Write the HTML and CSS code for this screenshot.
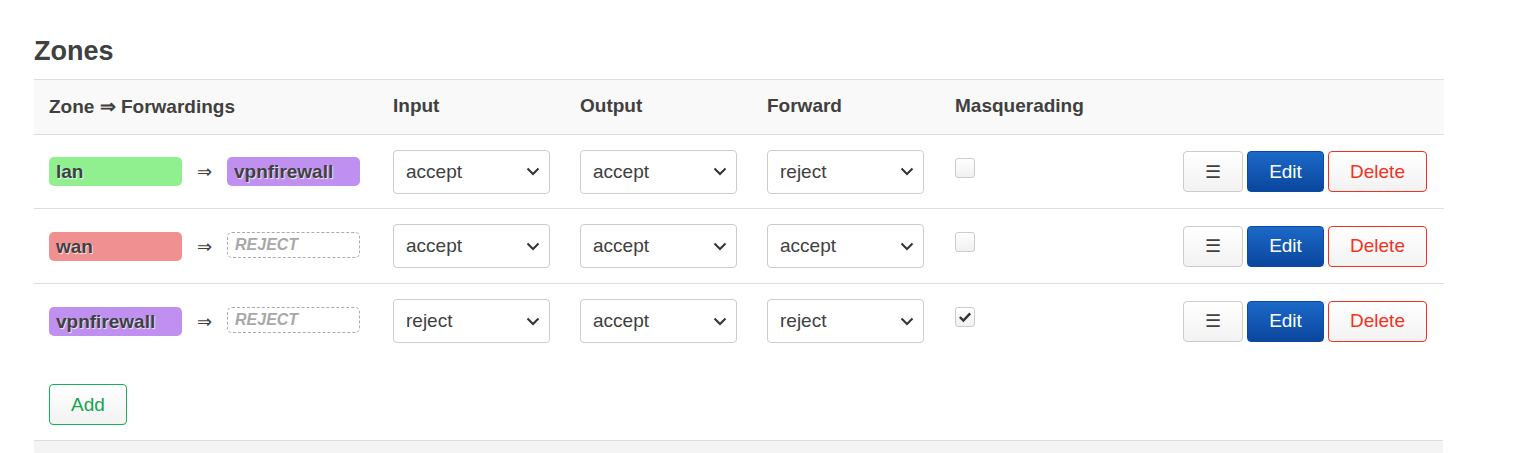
FILE: index.html
```html
<!DOCTYPE html>
<html lang="en">

<head>
  <meta charset="UTF-8">
  <title>Firewall - Zone Settings</title>
  <link rel="stylesheet" href="styles.css">
</head>

<body>
  <div class="section">
    <h3 class="section-title">Zones</h3>

    <div class="zone-table">
      <div class="tr th-row">
        <div class="th">Zone &rArr; Forwardings</div>
        <div class="th">Input</div>
        <div class="th">Output</div>
        <div class="th">Forward</div>
        <div class="th">Masquerading</div>
        <div class="th"></div>
      </div>

      <div class="tr first">
        <div class="td fwd">
          <span class="zonebadge lan">lan</span>
          <span class="arrow">&rArr;</span>
          <span class="zonebadge vpn">vpnfirewall</span>
        </div>
        <div class="td"><div class="select">accept</div></div>
        <div class="td"><div class="select">accept</div></div>
        <div class="td"><div class="select">reject</div></div>
        <div class="td"><span class="check"></span></div>
        <div class="td actions">
          <button class="btn btn-menu">&#9776;</button>
          <button class="btn btn-edit">Edit</button>
          <button class="btn btn-delete">Delete</button>
        </div>
      </div>

      <div class="tr">
        <div class="td fwd">
          <span class="zonebadge wan">wan</span>
          <span class="arrow">&rArr;</span>
          <span class="zonebadge empty">REJECT</span>
        </div>
        <div class="td"><div class="select">accept</div></div>
        <div class="td"><div class="select">accept</div></div>
        <div class="td"><div class="select">accept</div></div>
        <div class="td"><span class="check"></span></div>
        <div class="td actions">
          <button class="btn btn-menu">&#9776;</button>
          <button class="btn btn-edit">Edit</button>
          <button class="btn btn-delete">Delete</button>
        </div>
      </div>

      <div class="tr last">
        <div class="td fwd">
          <span class="zonebadge vpn">vpnfirewall</span>
          <span class="arrow">&rArr;</span>
          <span class="zonebadge empty">REJECT</span>
        </div>
        <div class="td"><div class="select">reject</div></div>
        <div class="td"><div class="select">accept</div></div>
        <div class="td"><div class="select">reject</div></div>
        <div class="td">
          <span class="check checked">
            <svg viewBox="0 0 20 20" width="16" height="16">
              <path d="M3.5 10 L8 14.5 L16.5 5.5" fill="none" stroke="#333" stroke-width="3" />
            </svg>
          </span>
        </div>
        <div class="td actions">
          <button class="btn btn-menu">&#9776;</button>
          <button class="btn btn-edit">Edit</button>
          <button class="btn btn-delete">Delete</button>
        </div>
      </div>
    </div>

    <div class="add-row">
      <button class="btn btn-add">Add</button>
    </div>
  </div>

  <div class="footer-bar"></div>
</body>

</html>
```

FILE: styles.css
```css
body {
  margin: 0;
  padding: 0 74px 0 34px;
  font-family: "Liberation Sans", Arial, sans-serif;
  color: #404040;
  background: #fff;
}

.section-title {
  margin: 0 0 12px;
  padding-top: 36px;
  font-size: 27px;
  font-weight: bold;
  line-height: 31px;
  color: #404040;
}

.zone-table {
  display: flex;
  flex-direction: column;
}

.tr {
  display: grid;
  grid-template-columns: 344px 187px 187px 188px 1fr auto;
  align-items: center;
  height: 75px;
  border-bottom: 1px solid #ddd;
  box-sizing: border-box;
}

.tr.first {
  height: 74px;
}

.tr.last {
  border-bottom: none;
  height: 74px;
}

.th-row {
  height: 56px;
  background: #f9f9f9;
  border-top: 1px solid #ddd;
}

.th {
  padding: 0 15px 2px;
  font-size: 19px;
  font-weight: bold;
  color: #404040;
}

.td {
  padding: 0 15px;
  display: flex;
  align-items: center;
}

.zonebadge {
  display: inline-block;
  width: 133px;
  height: 29px;
  box-sizing: border-box;
  border-radius: 5px;
  padding: 0 7px;
  font-size: 19px;
  font-weight: bold;
  line-height: 29px;
  color: #404040;
  text-shadow: 1px 1px 1px rgba(255, 255, 255, 0.8);
  white-space: nowrap;
}

.zonebadge.lan {
  background: #90f090;
}

.zonebadge.wan {
  background: #f09090;
}

.zonebadge.vpn {
  background: #c090f0;
}

.zonebadge.empty {
  background: #fff;
  border: 1px dashed #aaa;
  height: 26px;
  line-height: 24px;
  font-size: 16px;
  font-style: italic;
  color: #a8a8a8;
  text-shadow: none;
  padding: 0 7px;
  margin-top: -3px;
}

.arrow {
  width: 45px;
  text-align: center;
  font-family: "DejaVu Sans", sans-serif;
  font-size: 18px;
  color: #404040;
}

.select {
  width: 157px;
  height: 44px;
  box-sizing: border-box;
  border: 1px solid #ccc;
  border-radius: 4px;
  padding: 0 12px;
  font-size: 19px;
  line-height: 42px;
  color: #404040;
  background: #fff url("data:image/svg+xml;utf8,<svg xmlns='http://www.w3.org/2000/svg' width='14' height='9' viewBox='0 0 14 9'><path d='M1.5 1.5 L7 7 L12.5 1.5' fill='none' stroke='%23333' stroke-width='2'/></svg>") no-repeat right 9px center;
}

.check {
  width: 20px;
  height: 20px;
  box-sizing: border-box;
  border: 1px solid #ccc;
  border-radius: 3px;
  background: linear-gradient(#fff, #f0f0f0);
  margin-bottom: 8px;
  display: flex;
  align-items: center;
  justify-content: center;
}

.actions {
  justify-content: flex-end;
  gap: 4px;
  padding-right: 17px;
}

.btn {
  height: 41px;
  box-sizing: border-box;
  border-radius: 4px;
  font-family: inherit;
  font-size: 19px;
  padding: 0;
  cursor: pointer;
  background: linear-gradient(#fff, #f2f2f2);
}

.btn-menu {
  width: 60px;
  border: 1px solid #ccc;
  color: #404040;
  font-size: 18px;
}

.btn-edit {
  width: 77px;
  border: 1px solid #0a4aa0;
  color: #fff;
  background: linear-gradient(#1c69c8, #0a469d);
}

.btn-delete {
  width: 99px;
  border: 1px solid #f2321e;
  color: #f2321e;
}

.add-row {
  padding: 26px 15px 15px;
}

.btn-add {
  width: 78px;
  border: 1px solid #15b05a;
  color: #14a352;
}

.footer-bar {
  margin-right: 1px;
  height: 14px;
  border-top: 1px solid #ddd;
  background: #f4f4f4;
}
```
